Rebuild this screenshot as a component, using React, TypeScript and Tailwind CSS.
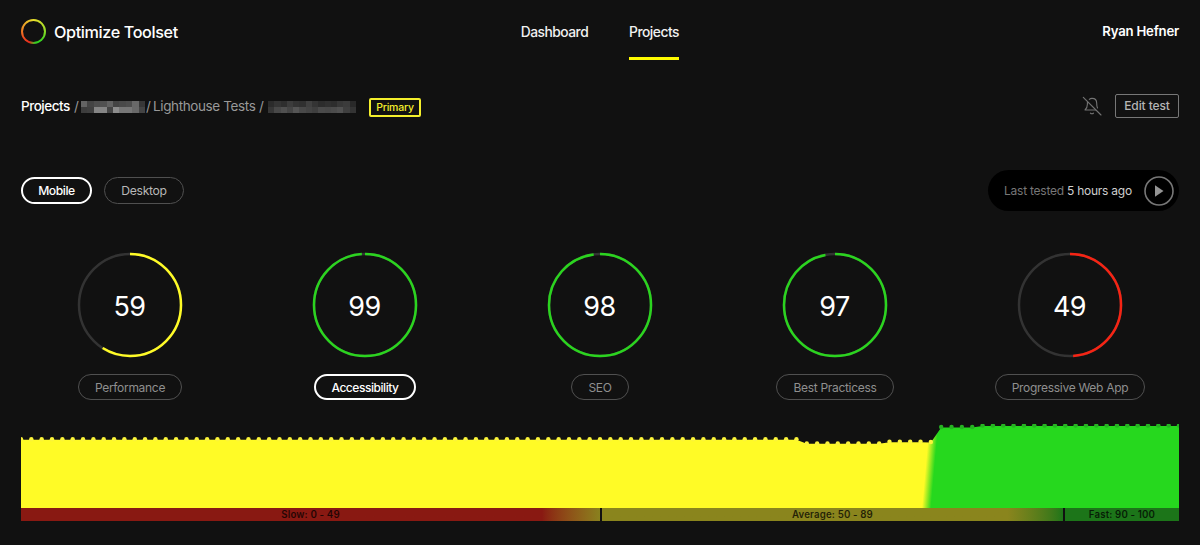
import React from 'react';
import clsx from 'clsx';

interface Score {
  label: string;
  value: number;
  color: string;
  active?: boolean;
}

const scores: Score[] = [
  { label: 'Performance', value: 59, color: '#fffb26' },
  { label: 'Accessibility', value: 99, color: '#2bd41f', active: true },
  { label: 'SEO', value: 98, color: '#2bd41f' },
  { label: 'Best Practicess', value: 97, color: '#2bd41f' },
  { label: 'Progressive Web App', value: 49, color: '#f62414' },
];

const STEPS = 112;
const CHART_WIDTH = 1158;

// top of the area, in chart pixels, for each test run
const historyY = (i: number) => {
  if (i <= 75) return 15.3;
  if (i <= 83) return 19.4;
  if (i <= 87) return 17.8;
  if (i === 88) return 18;
  if (i <= 92) return 3;
  return 1.6;
};

const history = Array.from({ length: STEPS + 1 }, (_, i) => ({
  x: (i * CHART_WIDTH) / STEPS,
  y: historyY(i),
  fast: i > 88,
}));

const Logo: React.FC = () => (
  <div className="flex size-[25px] items-center justify-center rounded-full bg-[conic-gradient(from_0deg,#e8df2c,#a5dc28_20%,#2bd41f_42%,#3fc723_48%,#e52b1c_56%,#ee4b20_66%,#ee8f26_80%,#e8df2c)]">
    <div className="size-[21px] rounded-full bg-[#111]" />
  </div>
);

const Redacted: React.FC<{ rows: string[][]; cell: number; className: string }> = ({ rows, cell, className }) => (
  <svg className={className} viewBox={`0 0 ${rows[0].length * cell} ${rows.length * cell}`} preserveAspectRatio="none" shapeRendering="crispEdges">
    {rows.map((row, y) =>
      row.map((fill, x) => <rect key={`${x}-${y}`} x={x * cell} y={y * cell} width={cell} height={cell} fill={fill} />)
    )}
  </svg>
);

const projectBlocks = [
  ['#646464', '#444', '#4d4d4d', '#515151', '#626262', '#444', '#494949', '#4d4d4d', '#686868', '#373737'],
  ['#3d3d3d', '#404040', '#858585', '#858585', '#454545', '#8d8d8d', '#777', '#777', '#696969', '#444'],
];

const testBlocks = [
  ['#2b2b2b', '#343434', '#2e2e2e', '#3c3c3c', '#333', '#303030', '#404040', '#343434', '#2c2c2c', '#303030', '#2d2d2d', '#373737', '#3b3b3b', '#292929'],
  ['#363636', '#484848', '#505050', '#454545', '#555', '#494949', '#444', '#3f3f3f', '#4b4b4b', '#494949', '#4c4c4c', '#515151', '#3f3f3f', '#343434'],
];

const BellOffIcon: React.FC = () => (
  <svg className="size-5" viewBox="0 0 20 20" fill="none" stroke="#747474" strokeWidth={1.1} strokeLinecap="round" strokeLinejoin="round">
    <path d="M1.3 1.3 19 19" />
    <path d="M7.3 3.3C8 2.7 9 2.4 10 2.4c3 0 4.7 2.2 4.7 4.9 0 2 .2 3.4.8 4.7" />
    <path d="M5.4 6.3v2c0 2.4-.6 4.1-2.4 5.7h10.6" />
    <path d="M8.4 17.1c.8.9 2.3.9 3.1 0" />
  </svg>
);

const Pill: React.FC<{ label: string; active?: boolean; className?: string }> = ({ label, active, className }) => (
  <button
    className={clsx(
      'flex items-center justify-center rounded-full whitespace-nowrap',
      active ? 'border-2 border-white font-medium tracking-[-0.45px] text-white' : 'border border-[#505050] tracking-[-0.3px]',
      className
    )}
  >
    {label}
  </button>
);

const Header: React.FC = () => (
  <header className="grid h-[60px] grid-cols-[500px_1fr_200px]">
    <div className="flex items-center gap-2 pt-[3px]">
      <Logo />
      <span className="pt-px text-[16.2px] font-medium tracking-[-0.37px]">Optimize Toolset</span>
    </div>
    <nav className="flex gap-[41px] text-[13.8px] font-medium tracking-[-0.5px]">
      <a className="flex w-[67px] items-center justify-center pt-1 whitespace-nowrap text-[#f1f1f1]">Dashboard</a>
      <a className="flex w-[50px] items-center justify-center border-b-[3px] border-[#fffb00] pt-[7px] whitespace-nowrap text-[#f1f1f1]">
        Projects
      </a>
    </nav>
    <div className="flex items-center justify-end pt-1 text-[13.2px] font-semibold tracking-[-0.22px]">Ryan Hefner</div>
  </header>
);

const Breadcrumbs: React.FC = () => (
  <div className="mt-[34px] flex h-6 items-center justify-between">
    <div className="flex items-center pt-px text-[13.5px] tracking-[-0.38px] text-[#999]">
      <span className="w-[50px] font-medium tracking-[-0.48px] whitespace-nowrap text-white">Projects</span>
      <span className="ml-[3px] w-[7px]">/</span>
      <Redacted rows={projectBlocks} cell={6} className="h-3 w-[64px]" />
      <span className="ml-px w-[7px]">/</span>
      <span className="w-[103px] whitespace-nowrap">Lighthouse Tests</span>
      <span className="ml-[3px] w-[9px]">/</span>
      <Redacted rows={testBlocks} cell={6} className="h-3 w-[88px]" />
      <span className="mt-px ml-[13px] flex h-[19px] w-[52px] items-center justify-center rounded-[2px] border-2 border-[#f4ef2c] pt-px text-[10.5px] font-medium tracking-[-0.2px] text-[#f4ef2c]">
        Primary
      </span>
    </div>
    <div className="flex items-center gap-[13px]">
      <BellOffIcon />
      <button className="flex h-6 w-16 items-center justify-center rounded-[2px] border border-[#777] text-[12px] font-medium tracking-[-0.1px] text-[#b5b5b5]">
        Edit test
      </button>
    </div>
  </div>
);

const Toolbar: React.FC = () => (
  <div className="mt-[52px] flex h-[41px] items-center justify-between">
    <div className="flex gap-[12px] text-[12.2px] text-[#b8b8b8]">
      <Pill label="Mobile" active className="h-[27px] w-[71px] pt-px" />
      <Pill label="Desktop" className="h-[27px] w-20 pt-px" />
    </div>
    <div className="flex h-full w-[191px] items-center justify-between rounded-full bg-black pr-[5px] pl-4 text-xs tracking-[-0.24px] text-[#777]">
      <span className="whitespace-nowrap">
        Last tested <span className="text-[#cfcfcf]">5 hours ago</span>
      </span>
      <svg className="size-[30px]" viewBox="0 0 30 30">
        <circle cx="15" cy="15" r="14" fill="none" stroke="#777" strokeWidth="1.6" />
        <path d="M11 9.3v11.4L19.5 15z" fill="#949494" />
      </svg>
    </div>
  </div>
);

const Gauge: React.FC<{ score: Score }> = ({ score }) => (
  <div className="flex flex-col items-center">
    <div className="grid size-[106px] place-items-center">
      <svg className="col-start-1 row-start-1 size-[106px] -rotate-90" viewBox="0 0 106 106" fill="none" strokeWidth={2.5}>
        <circle cx="53" cy="53" r="51" stroke="#333" />
        <circle cx="53" cy="53" r="51" stroke={score.color} pathLength={100} strokeDasharray={`${score.value} 100`} />
      </svg>
      <span className="col-start-1 row-start-1 pt-1 pr-px text-[27px] tracking-[-0.5px] text-white">{score.value}</span>
    </div>
    <Pill
      label={score.label}
      active={score.active}
      className={clsx('mt-4 h-[26px] pt-px text-xs', score.active ? 'px-[15px]' : 'px-4')}
    />
  </div>
);

const Scores: React.FC = () => (
  <div className="-mx-2 mt-[41px] grid grid-cols-[repeat(5,235px)] justify-center text-[#8f8f8f]">
    {scores.map((score) => (
      <Gauge key={score.label} score={score} />
    ))}
  </div>
);

const History: React.FC = () => {
  const area = history.map((p) => `L${p.x.toFixed(2)} ${(p.y + 0.4).toFixed(1)}`).join(' ');

  return (
    <div className="mt-6">
      <svg className="block h-[84px] w-full" viewBox="0 0 1158 84">
        <defs>
          <linearGradient id="speed" gradientUnits="userSpaceOnUse" x1="903" y1="60" x2="912" y2="60.8">
            <stop offset="0" stopColor="#fffb26" />
            <stop offset="1" stopColor="#26d81e" />
          </linearGradient>
        </defs>
        <path d={`M0 84 ${area} L1158 84Z`} fill="url(#speed)" />
        {history.map((p, i) => (
          <circle key={i} cx={p.x} cy={p.y} r={2.2} fill={p.fast ? '#26b322' : '#fbf43a'} />
        ))}
      </svg>
      <div className="grid h-[13px] grid-cols-[579px_2px_461px_2px_114px] text-center text-[9.7px] leading-[13px] font-semibold tracking-[0.15px] text-black/75">
        <span className="bg-linear-to-r from-[#891912] from-90% to-[#89811e]">Slow: 0 - 49</span>
        <span className="bg-[#111]" />
        <span className="bg-linear-to-r from-[#8a851d] from-88% to-[#1c7519]">Average: 50 - 89</span>
        <span className="bg-[#111]" />
        <span className="bg-[#1c7519]">Fast: 90 - 100</span>
      </div>
    </div>
  );
};

const App: React.FC = () => {
  return (
    <div className="h-[545px] w-[1200px] overflow-hidden bg-[#111] px-[21px] font-['Inter',sans-serif] text-white">
      <Header />
      <Breadcrumbs />
      <Toolbar />
      <Scores />
      <History />
    </div>
  );
};

export default App;
